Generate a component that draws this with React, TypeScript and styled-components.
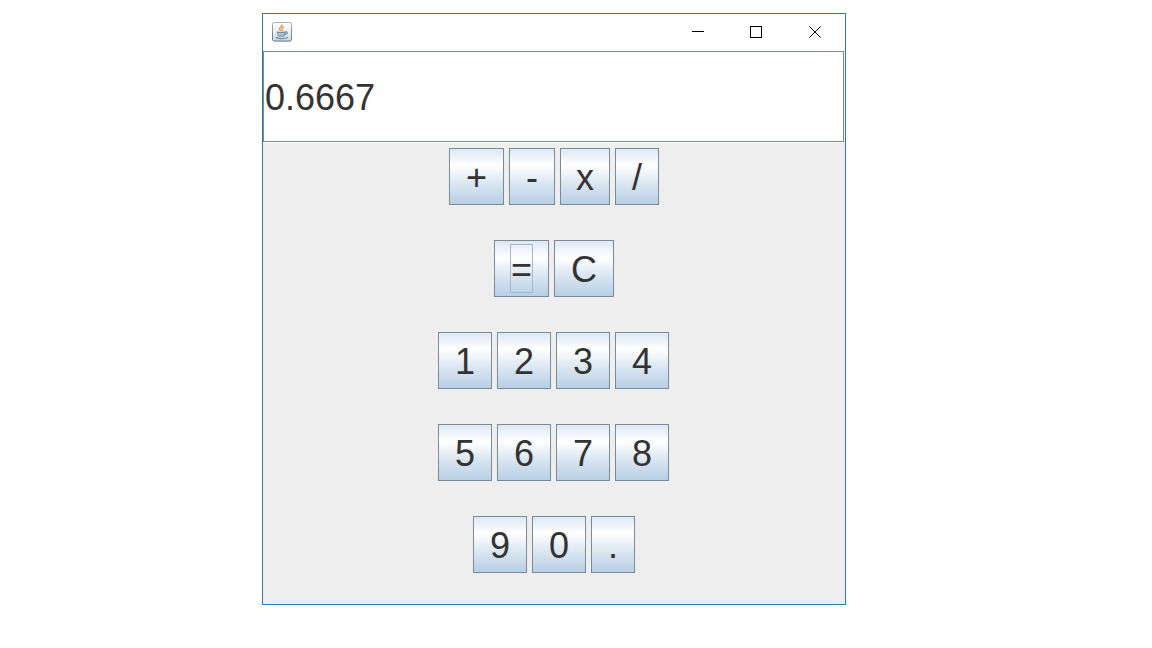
import React from "react";
import styled, { createGlobalStyle } from "styled-components";

const GlobalStyle = createGlobalStyle`
  *, *::before, *::after { box-sizing: border-box; }
  body {
    margin: 0;
    background: #ffffff;
    color: #333333;
    font-family: "Liberation Sans", Arial, sans-serif;
  }
`;

const Desktop = styled.main`
  display: flex;
  justify-content: center;
  padding: 13px 44px 13px 0;
`;

const Window = styled.section`
  flex: 0 1 584px;
  min-width: 0;
  padding-bottom: 1px;
  border: 1px solid #3279ab;
  background: #eeeeee;
`;

const TitleBar = styled.header`
  display: flex;
  align-items: stretch;
  justify-content: space-between;
  height: 37px;
  padding: 0 0 2px 9px;
  background: #ffffff;
`;

const AppIcon = styled.svg`
  align-self: center;
  width: 20px;
  height: 20px;
`;

const WindowControls = styled.div`
  display: flex;
`;

const ControlButton = styled.button<{ $width: number }>`
  display: flex;
  align-items: center;
  justify-content: center;
  width: ${(p) => p.$width}px;
  padding: 0;
  border: 0;
  background: transparent;

  svg {
    display: block;
    width: 12px;
    height: 12px;
    fill: none;
    stroke: #000000;
  }
`;

const DisplayFrame = styled.div`
  padding: 0 1px 1px 0;
  background: #ffffff;
`;

const Display = styled.input`
  display: block;
  width: 100%;
  height: 91px;
  padding: 2px 1px 0;
  border: 1px solid #7a8a99;
  border-left-color: #5f8fb4;
  border-radius: 0;
  outline: none;
  background: #ffffff;
  color: #333333;
  font: inherit;
  font-size: 36px;
`;

const KeyRow = styled.div<{ $trim: number }>`
  display: flex;
  align-items: flex-start;
  justify-content: center;
  gap: 5px;
  height: 92px;
  padding: 5px ${(p) => p.$trim}px 0 0;
`;

const Key = styled.button<{ $width: number }>`
  display: flex;
  flex: none;
  align-items: center;
  justify-content: center;
  width: ${(p) => p.$width}px;
  height: 57px;
  padding: 0;
  border: 1px solid #7a8a99;
  border-radius: 0;
  background: linear-gradient(#dde8f3 0%, #ffffff 30%, #dde8f3 60%, #b8cfe5 100%);
  color: #333333;
  font: inherit;
  font-size: 36px;
  line-height: 45px;
`;

const KeyLabel = styled.span<{ $focused: boolean }>`
  padding-top: 2px;
  border: 1px solid ${(p) => (p.$focused ? "#a3b8cc" : "transparent")};
`;

type KeySpec = { label: string; width: number; name?: string; focused?: boolean };

const digit = (label: string): KeySpec => ({ label, width: 54 });

const rows: KeySpec[][] = [
  [
    { label: "+", width: 55, name: "Add" },
    { label: "-", width: 46, name: "Subtract" },
    { label: "x", width: 50, name: "Multiply" },
    { label: "/", width: 44, name: "Divide" },
  ],
  [
    { label: "=", width: 55, name: "Equals", focused: true },
    { label: "C", width: 60, name: "Clear" },
  ],
  ["1", "2", "3", "4"].map(digit),
  ["5", "6", "7", "8"].map(digit),
  [digit("9"), digit("0"), { label: ".", width: 44, name: "Decimal point" }],
];

// Rows with an odd total width give up one pixel so their keys stay on whole pixels.
const oddWidth = (row: KeySpec[]) =>
  (row.reduce((sum, key) => sum + key.width, 0) + 5 * (row.length - 1)) % 2;

function JavaIcon() {
  return (
    <AppIcon viewBox="0 0 20 20" fill="none" aria-hidden="true">
      <defs>
        <linearGradient id="tile" x1="0" y1="0" x2="0" y2="1">
          <stop offset="0" stopColor="#ffffff" />
          <stop offset="0.5" stopColor="#eef1f4" />
          <stop offset="1" stopColor="#cdd6de" />
        </linearGradient>
        <linearGradient id="edge" x1="0" y1="0" x2="0" y2="1">
          <stop offset="0" stopColor="#a9b3bc" />
          <stop offset="1" stopColor="#587083" />
        </linearGradient>
      </defs>
      <rect x="0.5" y="0.5" width="19" height="18.6" rx="1.8" fill="url(#tile)" stroke="url(#edge)" />
      <path d="M10.400 2.800c.8 1.700-3.200 2.400-2.900 4.300.2 1 1.300 1.400 1.700 2.100" stroke="#e8953f" strokeWidth="1.500" />
      <path d="M12.200 5.200c-1.500.5-2.500 1.200-2.100 2.200.3.700.7 1-.1 2" stroke="#e59b55" strokeWidth="1.300" />
      <path d="M4.800 9.900c2 .9 6.600.9 8.600 0M5.600 9.900c.1 2.500 1 4 2 4.300h3.400c1.100-.3 2-1.800 2-4.300" stroke="#6f8ca3" strokeWidth="1.200" />
      <path d="M6.600 12.200h5.400" stroke="#8aa3b6" />
      <path d="M13.200 10c3-.7 3 2.200-.6 2.800" stroke="#6f8ca3" strokeWidth="1.100" />
      <path d="M3.800 15.400c2.500 1.600 9.700 1.500 12.200-.2" stroke="#6f8ca3" strokeWidth="1.300" />
    </AppIcon>
  );
}

export default function App() {
  return (
    <>
      <GlobalStyle />
      <Desktop>
        <Window aria-label="Calculator">
          <TitleBar>
            <JavaIcon />
            <WindowControls>
              <ControlButton type="button" $width={58} aria-label="Minimize">
                <svg viewBox="0 0 12 12"><path d="M0 5.500H12" /></svg>
              </ControlButton>
              <ControlButton type="button" $width={58} aria-label="Maximize">
                <svg viewBox="0 0 12 12"><rect x="0.5" y="0.5" width="11" height="11" /></svg>
              </ControlButton>
              <ControlButton type="button" $width={60} aria-label="Close">
                <svg viewBox="0 0 12 12"><path d="M0.300 0.300L11.700 11.700M11.700 0.300L0.300 11.700" /></svg>
              </ControlButton>
            </WindowControls>
          </TitleBar>
          <DisplayFrame>
            <Display type="text" aria-label="Result" defaultValue="0.6667" />
          </DisplayFrame>
          {rows.map((row, index) => (
            <KeyRow key={index} $trim={oddWidth(row)}>
              {row.map(({ label, width, name, focused }) => (
                <Key key={label} type="button" $width={width} aria-label={name}>
                  <KeyLabel $focused={Boolean(focused)}>{label}</KeyLabel>
                </Key>
              ))}
            </KeyRow>
          ))}
        </Window>
      </Desktop>
    </>
  );
}
